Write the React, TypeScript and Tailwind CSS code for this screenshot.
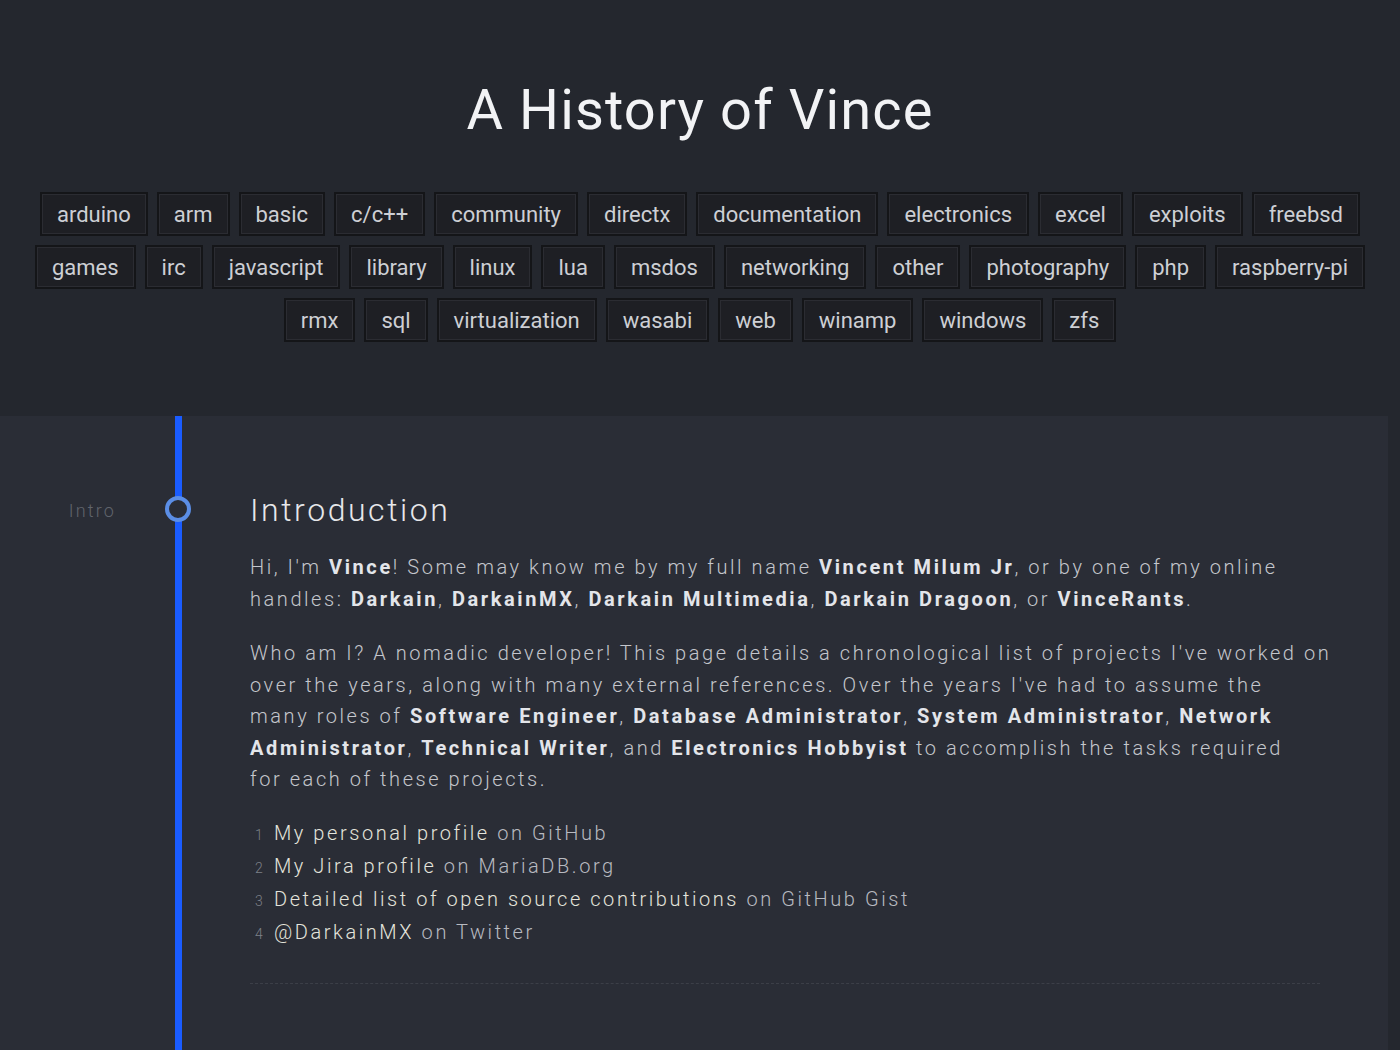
import React from 'react';

const tags = [
  'arduino', 'arm', 'basic', 'c/c++', 'community', 'directx', 'documentation', 'electronics', 'excel', 'exploits', 'freebsd',
  'games', 'irc', 'javascript', 'library', 'linux', 'lua', 'msdos', 'networking', 'other', 'photography', 'php', 'raspberry-pi',
  'rmx', 'sql', 'virtualization', 'wasabi', 'web', 'winamp', 'windows', 'zfs',
];

const links = [
  { link: 'My personal profile', rest: 'on GitHub' },
  { link: 'My Jira profile', rest: 'on MariaDB.org' },
  { link: 'Detailed list of open source contributions', rest: 'on GitHub Gist' },
  { link: '@DarkainMX', rest: 'on Twitter' },
];

const B: React.FC<{ children: React.ReactNode }> = ({ children }) => (
  <strong className="font-bold text-[#e3e5ea] tracking-[0.13em]">{children}</strong>
);

export default function App() {
  return (
    <div className="min-h-[1050px] bg-[#24272e] font-['Roboto',sans-serif] overflow-hidden">
      {/* header */}
      <div className="pt-[72px] flex flex-col items-center">
        <h1 className="text-[56px] leading-[76px] text-[#f2f3f5] tracking-[0.02em] font-normal">
          A History of Vince
        </h1>
        <div className="mt-[44px] w-[1360px] flex flex-wrap justify-center gap-x-[9px] gap-y-[9px]">
          {tags.map((t) => (
            <span
              key={t}
              className="h-[44px] px-[15px] flex items-center text-[22px] text-[#cdcfd4] bg-[#1e1f24] border-2 border-[#141518] shadow-[inset_0_0_0_1px_#2b2c32]"
            >
              {t}
            </span>
          ))}
        </div>
      </div>

      {/* timeline */}
      <div className="mt-[74px] mr-[12px] flex bg-[#2a2d36] min-h-[640px]">
        <div className="w-[175px] shrink-0 pt-[81px] pr-[59px] text-right text-[18px] font-light tracking-[0.12em] text-[#60646c]">
          Intro
        </div>
        <div className="relative flex-1 border-l-[7px] border-[#1a5cff]">
          <div className="absolute left-[-17px] top-[80px] w-[26px] h-[26px] rounded-full border-[4px] border-[#5b8ee6] bg-[#2a2d36]" />
          <div className="pl-[68px] pr-[68px] pt-[74px]">
            <h2 className="text-[32px] leading-[40px] font-light tracking-[0.08em] text-[#e6e7ea]">Introduction</h2>
            <div className="mt-[22px] -mr-[12px] text-[20px] leading-[31.5px] font-light tracking-[0.128em] text-[#c4c6cc]">
              <p>
                Hi, I'm <B>Vince</B>! Some may know me by my full name <B>Vincent Milum Jr</B>, or by one of my online
                handles: <B>Darkain</B>, <B>DarkainMX</B>, <B>Darkain Multimedia</B>, <B>Darkain Dragoon</B>, or{' '}
                <B>VinceRants</B>.
              </p>
              <p className="mt-[23px]">
                Who am I? A nomadic developer! This page details a chronological list of projects I've worked on
                <br />
                over the years, along with many external references. Over the years I've had to assume the
                <br />
                many roles of <B>Software Engineer</B>, <B>Database Administrator</B>, <B>System Administrator</B>,{' '}
                <B>Network Administrator</B>, <B>Technical Writer</B>, and <B>Electronics Hobbyist</B> to accomplish the
                tasks required
                <br />
                for each of these projects.
              </p>
              <ol className="mt-[21px]">
                {links.map((l, i) => (
                  <li key={i} className="flex items-baseline h-[33px] leading-[33px]">
                    <span className="w-[24px] pl-[5px] text-[14px] tracking-normal text-[#7d8088]">{i + 1}</span>
                    <span className="text-[#e4e4dc] whitespace-pre">{l.link} </span>
                    <span className="text-[#b8bac0]">{l.rest}</span>
                  </li>
                ))}
              </ol>
              <div className="mt-[34px] mr-[12px] border-t border-dashed border-[#3c3f48]" />
            </div>
          </div>
        </div>
      </div>
    </div>
  );
}
